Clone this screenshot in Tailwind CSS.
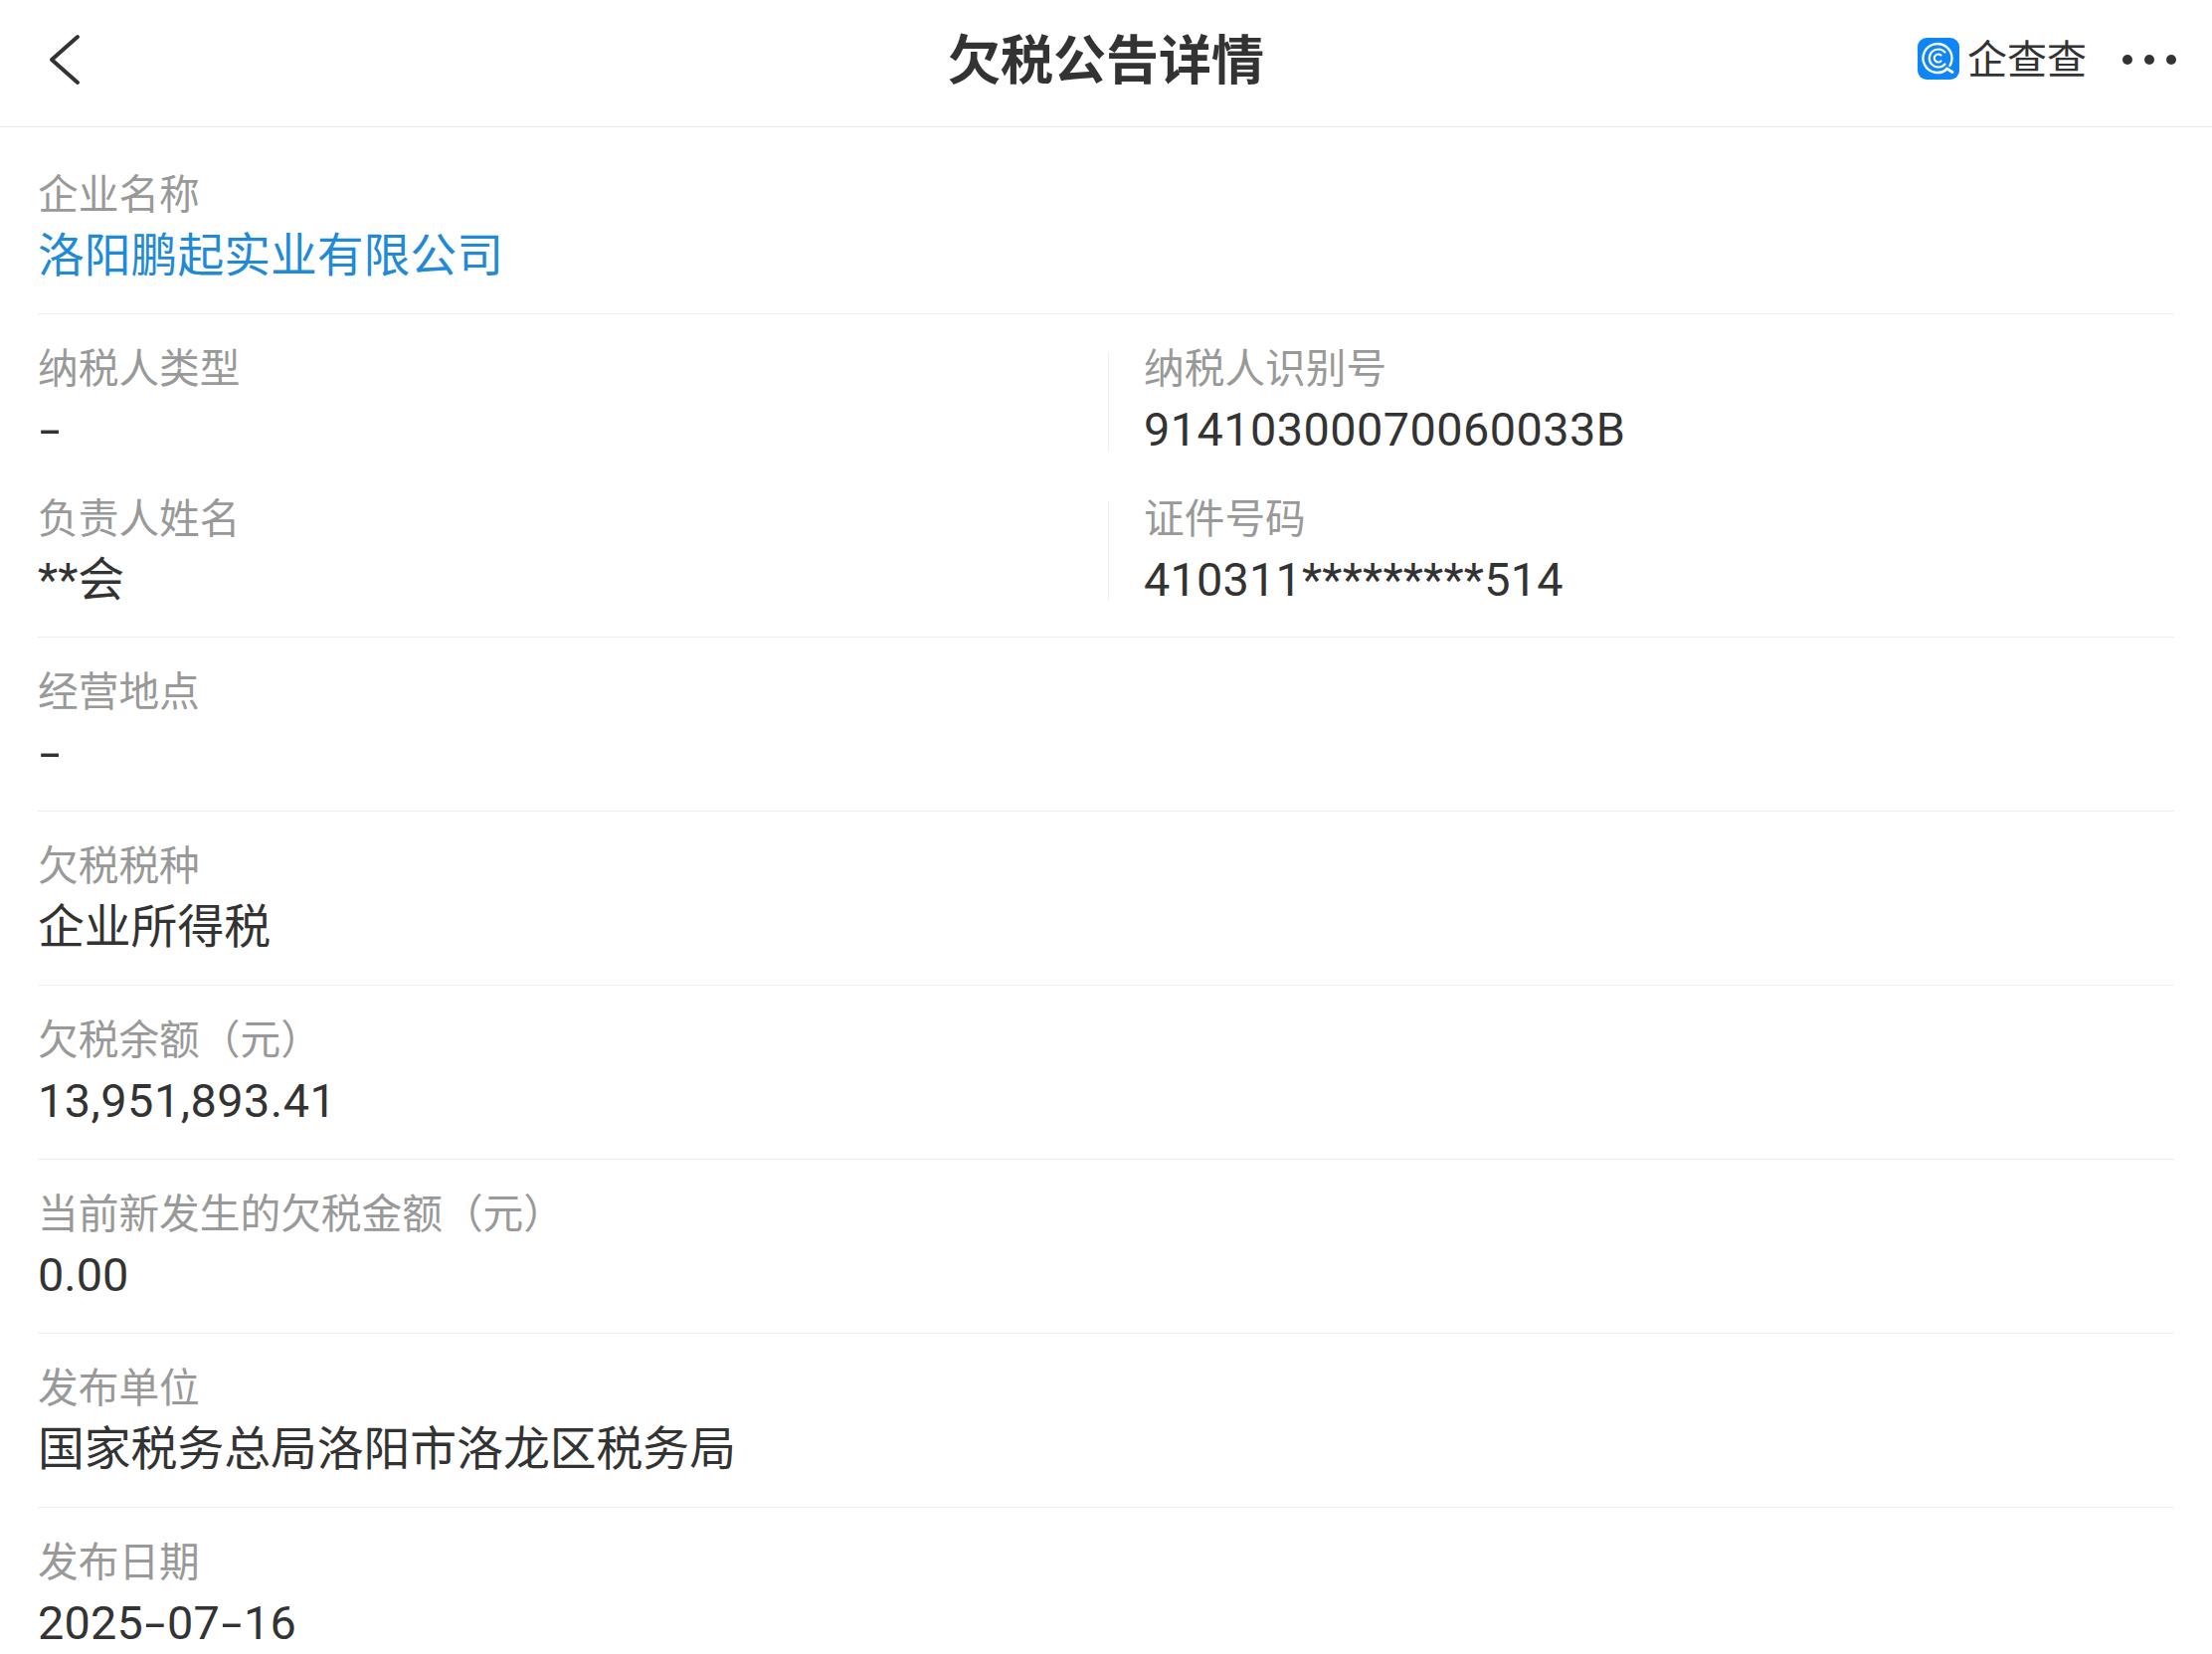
<!DOCTYPE html>
<html lang="zh-CN">
<head>
    <meta charset="UTF-8">
    <title>欠税公告详情</title>
    <script src="https://cdn.jsdelivr.net/npm/@tailwindcss/browser@4"></script>
</head>
<body class="bg-white font-['Roboto','Noto_Sans_CJK_SC',sans-serif] text-[#333]">
<div class="h-[1663px] overflow-hidden">

    <!-- Cabecera -->
    <header class="relative h-[128px] pb-[3px] border-b border-[#eaeaea] flex items-center justify-center">
        <svg class="absolute left-[48px] top-[34px]" width="34" height="52" viewBox="0 0 34 52" fill="none">
            <path d="M30 3 L4 26 L30 49" stroke="#333" stroke-width="4" stroke-linecap="round" stroke-linejoin="round"/>
        </svg>
        <h1 class="text-[53px] leading-[64px] font-bold text-[#333]">欠税公告详情</h1>
        <div class="absolute left-[1928px] top-[38px] flex items-start">
            <svg width="42" height="42" viewBox="0 0 42 42" fill="none">
                <rect width="42" height="42" rx="9" fill="#0f86f5"/>
                <path d="M29.5 31.5 A14.5 14.5 0 1 1 34.5 21 A14 14 0 0 1 32.5 28" stroke="#fff" stroke-width="2.4" stroke-linecap="round"/>
                <path d="M27.5 26.5 A9 9 0 1 1 27.5 14.5" stroke="#fff" stroke-width="2.2" stroke-linecap="round"/>
                <path d="M23.5 23.5 A4 4 0 1 1 23.5 17.5" stroke="#fff" stroke-width="2.2" stroke-linecap="round"/>
                <path d="M29.5 31 L35 34.5" stroke="#fff" stroke-width="2.8" stroke-linecap="round"/>
            </svg>
            <span class="ml-[8px] mt-[2px] text-[40px] leading-[42px] text-[#333]">企查查</span>
        </div>
        <div class="absolute left-[2134px] top-[55px] flex gap-[12px]">
            <span class="size-[10px] rounded-full bg-[#333]"></span>
            <span class="size-[10px] rounded-full bg-[#333]"></span>
            <span class="size-[10px] rounded-full bg-[#333]"></span>
        </div>
    </header>

    <main class="px-[38px]">
        <section class="pt-[40px] pb-[25px] border-b border-[#eee]">
            <p class="text-[40.7px] leading-[57px] text-[#999]">企业名称</p>
            <p class="text-[46.8px] leading-[65px] text-[#1f8ad8]">洛阳鹏起实业有限公司</p>
        </section>

        <section class="pt-[27px] pb-[24px] border-b border-[#eee] grid grid-cols-[1076px_1fr] gap-y-[29px]">
            <div class="pr-[36px]">
                <p class="text-[40.7px] leading-[57px] text-[#999]">纳税人类型</p>
                <p class="text-[46.8px] leading-[65px]"><span class="inline-block w-[24px] text-center scale-x-[1.6]">-</span></p>
            </div>
            <div class="relative pl-[36px]">
                <span class="absolute left-0 top-[11px] h-[100px] w-px bg-[#eee]"></span>
                <p class="text-[40.7px] leading-[57px] text-[#999]">纳税人识别号</p>
                <p class="text-[46.8px] leading-[65px] tracking-[0.45px]">91410300070060033B</p>
            </div>
            <div class="pr-[36px]">
                <p class="text-[40.7px] leading-[57px] text-[#999]">负责人姓名</p>
                <p class="text-[46.8px] leading-[65px]">**会</p>
            </div>
            <div class="relative pl-[36px]">
                <span class="absolute left-0 top-[10px] h-[100px] w-px bg-[#eee]"></span>
                <p class="text-[40.7px] leading-[57px] text-[#999]">证件号码</p>
                <p class="text-[46.8px] leading-[65px] tracking-[0.2px]">410311*********514</p>
            </div>
        </section>

        <section class="pt-[27px] pb-[25px] border-b border-[#eee]">
            <p class="text-[40.7px] leading-[57px] text-[#999]">经营地点</p>
            <p class="text-[46.8px] leading-[65px]"><span class="inline-block w-[24px] text-center scale-x-[1.6]">-</span></p>
        </section>
        <section class="pt-[27px] pb-[25px] border-b border-[#eee]">
            <p class="text-[40.7px] leading-[57px] text-[#999]">欠税税种</p>
            <p class="text-[46.8px] leading-[65px]">企业所得税</p>
        </section>
        <section class="pt-[27px] pb-[25px] border-b border-[#eee]">
            <p class="text-[40.7px] leading-[57px] text-[#999]">欠税余额（元）</p>
            <p class="text-[46.8px] leading-[65px] tracking-[0.5px]">13,951,893.41</p>
        </section>
        <section class="pt-[27px] pb-[25px] border-b border-[#eee]">
            <p class="text-[40.7px] leading-[57px] text-[#999]">当前新发生的欠税金额（元）</p>
            <p class="text-[46.8px] leading-[65px]">0.00</p>
        </section>
        <section class="pt-[27px] pb-[25px] border-b border-[#eee]">
            <p class="text-[40.7px] leading-[57px] text-[#999]">发布单位</p>
            <p class="text-[46.8px] leading-[65px]">国家税务总局洛阳市洛龙区税务局</p>
        </section>
        <section class="pt-[27px]">
            <p class="text-[40.7px] leading-[57px] text-[#999]">发布日期</p>
            <p class="text-[46.8px] leading-[65px] tracking-[0.2px]">2025<span class="inline-block w-[24px] text-center scale-x-[1.6]">-</span>07<span class="inline-block w-[24px] text-center scale-x-[1.6]">-</span>16</p>
        </section>
    </main>
</div>
</body>
</html>
